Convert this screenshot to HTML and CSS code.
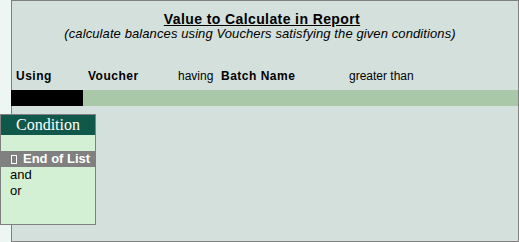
FILE: index.html
```html
<!DOCTYPE html>
<html>
<head>
<meta charset="utf-8">
<link rel="stylesheet" href="styles.css">
</head>
<body>
<div class="screen">
  <div class="strip"></div>
  <div class="panel">
    <div class="title"><span class="title-text">Value to Calculate in Report</span></div>
    <div class="subtitle">(calculate balances using Vouchers satisfying the given conditions)</div>
    <div class="fields">
      <span class="f f-using b">Using</span>
      <span class="f f-voucher b">Voucher</span>
      <span class="f f-having">having</span>
      <span class="f f-batch b">Batch Name</span>
      <span class="f f-greater">greater than</span>
    </div>
    <div class="bar"><div class="bar-cursor"></div></div>
  </div>
  <div class="popup">
    <div class="popup-head">Condition</div>
    <div class="popup-body">
      <div class="item"></div>
      <div class="item sel"><span class="box"></span>End of List</div>
      <div class="item">and</div>
      <div class="item">or</div>
    </div>
  </div>
</div>
</body>
</html>
```

FILE: styles.css
```css
html, body {
  margin: 0;
  padding: 0;
}
body {
  width: 519px;
  height: 242px;
  overflow: hidden;
  font-family: "Liberation Sans", Arial, sans-serif;
  background: #eef6f4;
}
.screen {
  position: relative;
  display: flex;
  width: 519px;
  height: 242px;
}
.strip {
  width: 11px;
  flex: none;
  background: #eef6f4;
}
.panel {
  flex: 1;
  box-sizing: border-box;
  height: 242px;
  border: 1px solid #808080;
  background: #d4e0dc;
  padding-top: 10px;
  display: flex;
  flex-direction: column;
}
.title {
  text-align: center;
  font-weight: bold;
  font-size: 14px;
  letter-spacing: 0.4px;
  line-height: 16px;
  height: 16px;
  color: #000;
  padding-right: 6px;
}
.title-text {
  text-decoration: underline;
  text-underline-offset: 1px;
}
.subtitle {
  text-align: center;
  font-style: italic;
  font-size: 13px;
  letter-spacing: 0.1px;
  line-height: 14px;
  height: 14px;
  color: #000;
  padding-right: 10px;
}
.fields {
  margin-top: 28px;
  display: flex;
  font-size: 12px;
  line-height: 14px;
  height: 14px;
  padding-left: 4px;
  color: #000;
}
.f { display: block; white-space: nowrap; }
.b { font-weight: bold; letter-spacing: 0.5px; }
.f-using { width: 72px; }
.f-voucher { width: 90px; }
.f-having { width: 43px; }
.f-batch { width: 128px; }
.bar {
  margin-top: 7px;
  margin-left: -1px;
  height: 16px;
  background: #a8c8a8;
}
.bar-cursor {
  width: 72px;
  height: 16px;
  background: #000;
}
.popup {
  position: absolute;
  left: 0;
  top: 114px;
  width: 96px;
  height: 111px;
  box-sizing: border-box;
  border: 1px solid #808080;
  background: #d4f0d4;
}
.popup-head {
  height: 20px;
  background: #10584a;
  color: #fff;
  font-family: "Liberation Serif", "Times New Roman", serif;
  font-size: 16px;
  line-height: 20px;
  text-align: center;
}
.item {
  height: 16px;
  line-height: 16px;
  font-size: 13px;
  padding-left: 9px;
  color: #000;
  white-space: nowrap;
}
.item.sel {
  background: #808080;
  color: #fff;
  font-weight: bold;
  display: flex;
  align-items: center;
}
.box {
  display: inline-block;
  box-sizing: border-box;
  width: 6px;
  height: 9px;
  border: 1px solid #fff;
  margin-left: 1px;
  margin-right: 6px;
}
```
